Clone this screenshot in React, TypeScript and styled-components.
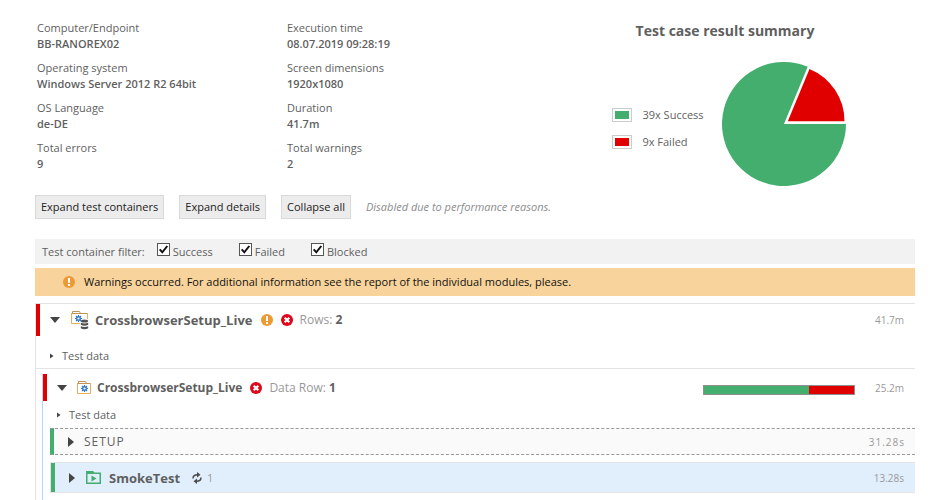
import React from 'react';
import styled, { createGlobalStyle } from 'styled-components';

const GREEN = '#43ae6e';
const RED = '#e00000';

const GlobalStyle = createGlobalStyle`
  *, *::before, *::after { box-sizing: border-box; }
  body {
    margin: 0;
    background: #fff;
    color: #5f5f5f;
    font-family: "Open Sans", "Noto Sans", sans-serif;
    font-size: 11px;
    line-height: 16px;
  }
  svg { display: block; flex: none; }
  button, input { font: inherit; margin: 0; }
`;

const Page = styled.main`
  padding: 20px 35px 0;
`;

const Summary = styled.section`
  display: flex;
  align-items: flex-start;
`;

const Facts = styled.dl`
  display: grid;
  grid-template-columns: 250px 250px;
  row-gap: 8px;
  margin: 0;
  padding-left: 2px;
`;

const Fact = styled.div`
  dt, dd { margin: 0; }
  dd { font-weight: 600; }
`;

const Results = styled.div`
  flex: 1;
  display: flex;
  flex-direction: column;
  align-items: center;
`;

const ResultsTitle = styled.h1`
  margin: 0 2px 0 0;
  font-size: 14px;
  line-height: 22px;
  font-weight: 700;
`;

const ChartArea = styled.div`
  display: flex;
  align-items: center;
  gap: 18px;
  margin-top: 20px;
  padding-left: 6px;
`;

const Legend = styled.ul`
  list-style: none;
  margin: 0;
  padding: 8px 0 0;
  display: grid;
  row-gap: 11px;
`;

const LegendItem = styled.li`
  display: flex;
  align-items: center;
  gap: 10px;
`;

const Swatch = styled.span<{ $color: string }>`
  width: 20px;
  height: 14px;
  padding: 2px;
  border: 1px solid #ccc;
  background: ${(p) => p.$color} content-box;
`;

const Actions = styled.div`
  display: flex;
  align-items: center;
  gap: 15px;
  margin-top: 9px;
`;

const ActionButton = styled.button`
  height: 24px;
  padding: 0 5px;
  border: 1px solid #d9d9d9;
  background: #ececec;
  color: #222;
  white-space: nowrap;
`;

const Note = styled.em`
  color: #8c8c8c;
`;

const FilterBar = styled.fieldset`
  display: flex;
  align-items: center;
  height: 25px;
  margin: 20px 0 0;
  padding: 0 7px;
  border: 0;
  background: #f2f2f2;
`;

const FilterTitle = styled.span`
  margin-right: 12px;
`;

const FilterOption = styled.label`
  display: flex;
  align-items: center;
  gap: 3px;
  margin-right: 26px;
`;

const CheckFrame = styled.span`
  position: relative;
  width: 13px;
  height: 13px;
  margin-bottom: 4px;

  svg {
    position: absolute;
    inset: 0;
    pointer-events: none;
    visibility: hidden;
  }
  input:checked + svg { visibility: visible; }
`;

const CheckInput = styled.input`
  appearance: none;
  display: block;
  width: 13px;
  height: 13px;
  border: 1px solid #555;
  background: #fff;
`;

const WarningBar = styled.div`
  display: flex;
  align-items: center;
  gap: 9px;
  height: 28px;
  margin-top: 4px;
  padding: 0 28px;
  background: #f8d49c;
  color: #111;
`;

const Container = styled.section`
  margin-top: 7px;
  border-top: 1px solid #e4e4e4;
  border-left: 1px solid #e4e4e4;
`;

const Nested = styled.section`
  margin: 5px 0 0 6px;
  min-height: 132px;
  border-left: 1px solid #b5d6fb;
`;

const HeaderRow = styled.header<{ $size: 'large' | 'small' }>`
  display: flex;
  align-items: center;
  height: ${(p) => (p.$size === 'large' ? 32 : 27)}px;
  padding: 0 11px 0 10px;
  border-left: 4px solid ${RED};
`;

const Toggle = styled.button`
  display: flex;
  align-items: center;
  flex: none;
  padding: 0;
  border: 0;
  background: none;
  color: #444;
`;

const TypeIcon = styled.span<{ $gap: number }>`
  margin-left: ${(p) => p.$gap}px;
`;

const Name = styled.h2<{ $size: number }>`
  margin: 0 8px 0 6px;
  font-size: ${(p) => p.$size}px;
  line-height: 20px;
  font-weight: 700;
`;

const Badges = styled.span`
  display: flex;
  gap: 8px;
`;

const Count = styled.span`
  margin-left: 7px;
  color: #999;
  font-size: 12px;
  strong { color: #5f5f5f; font-weight: 700; }
`;

const Time = styled.span`
  margin-left: auto;
  color: #999;
  font-size: 10px;
`;

const DataRow = styled.div<{ $tall?: boolean }>`
  display: flex;
  align-items: center;
  gap: 8px;
  height: 27px;
  padding-left: 14px;
  ${(p) => p.$tall && 'height: 33px; padding-top: 7px; border-bottom: 1px solid #e4e4e4;'}
`;

const Ratio = styled.div`
  display: flex;
  width: 152px;
  height: 10px;
  margin: 5px 0 0 auto;
  border: 1px solid #8f8f8f;
  background: ${RED};

  & + ${Time} { margin-left: 20px; }
`;

const RatioPart = styled.span`
  width: 70%;
  background: ${GREEN};
`;

const Steps = styled.div`
  display: grid;
  row-gap: 7px;
  margin-left: 7px;
`;

const SetupRow = styled.div`
  display: flex;
  align-items: center;
  height: 27px;
  padding: 0 10px 0 18px;
  border-top: 1px dashed #999;
  border-bottom: 1px dashed #999;
  background: linear-gradient(to right, ${GREEN} 4px, #fafafa 4px);
  letter-spacing: 1px;
`;

const SetupName = styled.span`
  margin-left: 10px;
  font-size: 12px;
`;

const TestRow = styled.div`
  display: flex;
  align-items: center;
  height: 31px;
  padding: 0 11px 0 18px;
  border: 1px solid #e4e4e4;
  border-right: 0;
  background: linear-gradient(to right, ${GREEN} 4px, #e1effd 4px);

  ${Name} { margin-left: 8px; }
`;

const Iterations = styled.span`
  display: flex;
  align-items: center;
  gap: 5px;
  margin-left: 4px;
  color: #999;
`;

const Arrow = ({ kind, label }: { kind: 'down' | 'right' | 'tiny'; label: string }) => (
  <Toggle type="button" aria-label={label} aria-expanded={kind === 'down'}>
    {kind === 'down' && (
      <svg width="10" height="6" viewBox="0 0 10 6"><path d="M0 0h10L5 6z" fill="currentColor" /></svg>
    )}
    {kind === 'right' && (
      <svg width="6" height="10" viewBox="0 0 6 10"><path d="M0 0l6 5-6 5z" fill="currentColor" /></svg>
    )}
    {kind === 'tiny' && (
      <svg width="4" height="6" viewBox="0 0 4 6"><path d="M0 0.5L3.5 3 0 5.5z" fill="currentColor" /></svg>
    )}
  </Toggle>
);

const WarningIcon = () => (
  <svg width="12" height="12" viewBox="0 0 12 12">
    <circle cx="6" cy="6" r="6" fill="#ec9a33" />
    <rect x="5" y="2" width="2" height="5" fill="#fff" />
    <rect x="5" y="8" width="2" height="2" fill="#fff" />
  </svg>
);

const ErrorIcon = () => (
  <svg width="12" height="12" viewBox="0 0 12 12">
    <circle cx="6" cy="6" r="6" fill="#e0061c" />
    <path d="M3.7 3.7l4.6 4.6M8.3 3.7L3.7 8.3" stroke="#fff" strokeWidth="2.2" />
  </svg>
);

const Gear = () => (
  <g stroke="#2f7dc8" fill="none">
    <circle cx="7.5" cy="7.5" r="1.8" strokeWidth="1.4" />
    <path
      d="M7.5 4v1.2M7.5 9.8v1.2M4 7.5h1.2M9.8 7.5h1.2M5 5l1 1M9 9l1 1M10 5l-1 1M6 9l-1 1"
      strokeWidth="1.2"
    />
  </g>
);

const FolderShape = () => (
  <>
    <path d="M0.5 12.5v-10h13v10z" fill="#fff" stroke="#eaae58" />
    <path d="M0.5 2.5h13M1.5 2.5V0.5h7l1 2" fill="none" stroke="#c09458" />
  </>
);

const DataFolderIcon = () => (
  <svg width="18" height="19" viewBox="0 0 18 19">
    <path d="M9 12.5H0.5v-10h16v7" fill="#fff" stroke="#eaae58" />
    <path d="M0.5 2.5h16M1.5 2.5V0.5h7l1 2" fill="none" stroke="#c09458" />
    <rect x="9" y="8" width="9" height="11" fill="#fff" />
    <Gear />
    <g fill="#505050">
      <ellipse cx="13.5" cy="10" rx="3.7" ry="1.6" />
      <path d="M9.8 11.8q3.7 1.6 7.4 0v2q-3.7 1.8-7.4 0z" />
      <path d="M9.8 15.2q3.7 1.6 7.4 0v2q-3.7 2.2-7.4 0z" />
    </g>
  </svg>
);

const FolderIcon = () => (
  <svg width="14" height="13" viewBox="0 0 14 13">
    <FolderShape />
    <Gear />
  </svg>
);

const TestCaseIcon = () => (
  <svg width="15" height="13" viewBox="0 0 15 13">
    <path d="M0.75 12.25V0.75h6l1.5 1.5h6v10z" fill="none" stroke={GREEN} strokeWidth="1.5" />
    <path d="M1 1h6l1 2H1z" fill={GREEN} />
    <path d="M5.5 4.5l5 3-5 3z" fill={GREEN} />
  </svg>
);

const RepeatIcon = () => (
  <svg width="10" height="12" viewBox="0 0 10 12">
    <g fill="none" stroke="#4b4b4b" strokeWidth="1.5">
      <path d="M1 6.5Q1 2.7 5.5 2.7" />
      <path d="M9 5.5Q9 9.3 4.5 9.3" />
    </g>
    <path d="M5 0l3.5 2.7L5 5.4zM5 6.6L1.5 9.3 5 12z" fill="#4b4b4b" />
  </svg>
);

const Pie = () => (
  <svg width="124" height="124" viewBox="0 0 124 124" role="img" aria-label="39 success, 9 failed">
    <path d="M62 62H124A62 62 0 1 1 85.7 4.7z" fill={GREEN} />
    <path d="M65.8 59.3H122.5A56.7 56.7 0 0 0 87.5 6.9z" fill={RED} />
  </svg>
);

const facts = [
  ['Computer/Endpoint', 'BB-RANOREX02'],
  ['Execution time', '08.07.2019 09:28:19'],
  ['Operating system', 'Windows Server 2012 R2 64bit'],
  ['Screen dimensions', '1920x1080'],
  ['OS Language', 'de-DE'],
  ['Duration', '41.7m'],
  ['Total errors', '9'],
  ['Total warnings', '2'],
];

export default function App() {
  return (
    <>
      <GlobalStyle />
      <Page>
        <Summary>
          <Facts>
            {facts.map(([label, value]) => (
              <Fact key={label}>
                <dt>{label}</dt>
                <dd>{value}</dd>
              </Fact>
            ))}
          </Facts>
          <Results>
            <ResultsTitle>Test case result summary</ResultsTitle>
            <ChartArea>
              <Legend>
                <LegendItem><Swatch $color={GREEN} />39x Success</LegendItem>
                <LegendItem><Swatch $color={RED} />9x Failed</LegendItem>
              </Legend>
              <Pie />
            </ChartArea>
          </Results>
        </Summary>

        <Actions>
          <ActionButton type="button">Expand test containers</ActionButton>
          <ActionButton type="button">Expand details</ActionButton>
          <ActionButton type="button">Collapse all</ActionButton>
          <Note>Disabled due to performance reasons.</Note>
        </Actions>

        <FilterBar aria-label="Test container filter">
          <FilterTitle>Test container filter:</FilterTitle>
          {['Success', 'Failed', 'Blocked'].map((name) => (
            <FilterOption key={name}>
              <CheckFrame>
                <CheckInput type="checkbox" defaultChecked />
                <svg width="13" height="13" viewBox="0 0 13 13">
                  <path d="M2.7 6.3l2.6 3 5-6.3" fill="none" stroke="#111" strokeWidth="2" />
                </svg>
              </CheckFrame>
              {name}
            </FilterOption>
          ))}
        </FilterBar>

        <WarningBar role="status">
          <WarningIcon />
          Warnings occurred. For additional information see the report of the individual modules, please.
        </WarningBar>

        <Container>
          <HeaderRow $size="large">
            <Arrow kind="down" label="Collapse CrossbrowserSetup_Live" />
            <TypeIcon $gap={11}><DataFolderIcon /></TypeIcon>
            <Name $size={13}>CrossbrowserSetup_Live</Name>
            <Badges><WarningIcon /><ErrorIcon /></Badges>
            <Count>Rows: <strong>2</strong></Count>
            <Time>41.7m</Time>
          </HeaderRow>
          <DataRow $tall><Arrow kind="tiny" label="Expand test data" />Test data</DataRow>

          <Nested>
            <HeaderRow $size="small">
              <Arrow kind="down" label="Collapse data row 1" />
              <TypeIcon $gap={10}><FolderIcon /></TypeIcon>
              <Name $size={12}>CrossbrowserSetup_Live</Name>
              <Badges><ErrorIcon /></Badges>
              <Count>Data Row: <strong>1</strong></Count>
              <Ratio><RatioPart /></Ratio>
              <Time>25.2m</Time>
            </HeaderRow>
            <DataRow><Arrow kind="tiny" label="Expand test data of row 1" />Test data</DataRow>
            <Steps>
              <SetupRow>
                <Arrow kind="right" label="Expand setup" />
                <SetupName>SETUP</SetupName>
                <Time>31.28s</Time>
              </SetupRow>
              <TestRow>
                <Arrow kind="right" label="Expand SmokeTest" />
                <TypeIcon $gap={11}><TestCaseIcon /></TypeIcon>
                <Name $size={13}>SmokeTest</Name>
                <Iterations><RepeatIcon />1</Iterations>
                <Time>13.28s</Time>
              </TestRow>
            </Steps>
          </Nested>
        </Container>
      </Page>
    </>
  );
}
